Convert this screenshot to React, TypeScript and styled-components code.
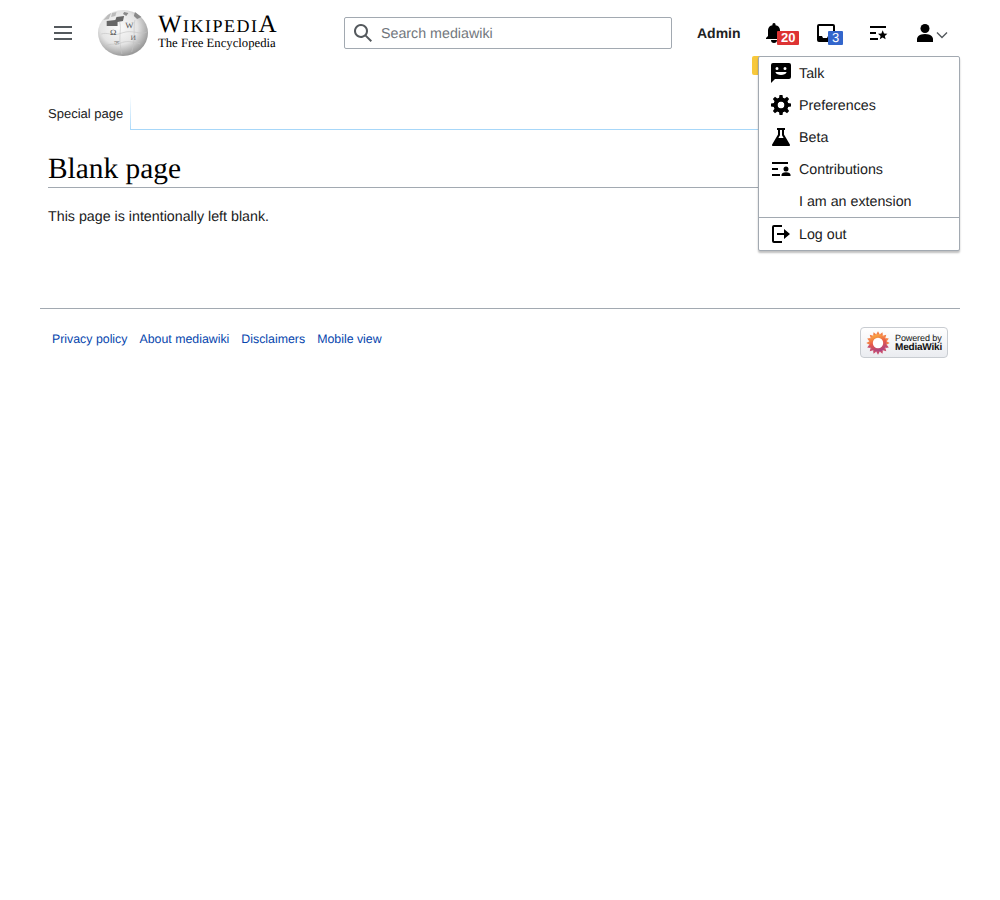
import React from "react";
import styled, { createGlobalStyle } from "styled-components";

const GlobalStyle = createGlobalStyle`
  html, body {
    margin: 0;
    padding: 0;
    background: #fff;
    font-family: "Liberation Sans", Arial, sans-serif;
    color: #202122;
    text-rendering: geometricPrecision;
  }
`;

const Page = styled.div`
  padding: 0 40px;
  width: 920px;
`;

const Header = styled.header`
  display: flex;
  align-items: center;
  height: 66px;
`;

const MenuButton = styled.div`
  width: 20px;
  height: 14px;
  margin: 0 25px 0 13px;
  color: #54595d;
  flex: none;

  svg {
    display: block;
  }
`;

const Logo = styled.div`
  display: flex;
  align-items: center;
  gap: 10px;
  width: 246px;
  flex: none;
`;

const Wordmark = styled.div`
  font-family: "Liberation Serif", "Times New Roman", serif;
  color: #000;
  display: flex;
  flex-direction: column;
  margin-top: -3px;
`;

const WordmarkTitle = styled.div`
  font-size: 25px;
  line-height: 24px;
  font-variant: small-caps;
  letter-spacing: 1.5px;
  white-space: nowrap;
`;

const WordmarkTag = styled.div`
  font-size: 12.7px;
  line-height: 14px;
  margin-top: -1px;
  white-space: nowrap;
`;

const SearchBox = styled.div`
  display: flex;
  align-items: center;
  gap: 8px;
  box-sizing: border-box;
  width: 328px;
  height: 32px;
  padding: 0 8px;
  border: 1px solid #a2a9b1;
  border-radius: 2px;
  color: #72777d;
  font-size: 14.25px;
  flex: none;
  margin-top: -1px;

  svg {
    color: #54595d;
    flex: none;
  }
`;

const TextLabel = styled.span`
  padding-top: 2px;
`;

const UserTools = styled.nav`
  position: relative;
  display: flex;
  align-items: center;
  margin-left: 25px;
  height: 40px;
`;

const UserName = styled.div`
  font-size: 14px;
  font-weight: bold;
  width: 67px;
`;

const ToolIcon = styled.div<{ $width: number }>`
  position: relative;
  width: ${(p) => p.$width}px;
  height: 20px;
  color: #000;
  flex: none;

  svg {
    display: block;
  }
`;

const Badge = styled.span<{ $bg: string; $left: number; $bold?: boolean }>`
  position: absolute;
  top: 8px;
  left: ${(p) => p.$left}px;
  padding: 0 4px;
  height: 14px;
  line-height: 14px;
  font-size: 13px;
  color: #fff;
  background: ${(p) => p.$bg};
  font-weight: ${(p) => (p.$bold ? "bold" : "normal")};
  border-radius: 1px;
`;

const Chevron = styled.svg`
  position: absolute;
  left: 21px;
  top: 8px;
`;

const YellowTag = styled.div`
  position: absolute;
  left: 55px;
  top: 43px;
  width: 20px;
  height: 19px;
  background: #f7c83c;
  border-radius: 2px;
`;

const Dropdown = styled.div`
  position: absolute;
  top: 43px;
  left: 61px;
  box-sizing: border-box;
  width: 202px;
  background: #fff;
  border: 1px solid #a2a9b1;
  border-radius: 2px;
  box-shadow: 0 2px 2px rgba(0, 0, 0, 0.25);
  z-index: 2;
`;

const DropdownItem = styled.div<{ $divided?: boolean }>`
  display: flex;
  align-items: center;
  gap: 8px;
  height: 32px;
  padding-left: 12px;
  font-size: 14.25px;
  color: #202122;
  border-top: ${(p) => (p.$divided ? "1px solid #a2a9b1" : "none")};

  svg {
    color: #000;
    flex: none;
  }
`;

const ItemIconSpace = styled.span`
  width: 20px;
  flex: none;
`;

const Tabs = styled.div`
  display: flex;
  height: 33px;
  margin-top: 31px;
`;

const Tab = styled.div`
  box-sizing: border-box;
  width: 91px;
  padding: 9px 0 0 8px;
  font-size: 13px;
  line-height: 16px;
  border-right: 1px solid;
  border-image: linear-gradient(to bottom, #fff 0, #a7d7f9 100%) 1;
`;

const TabRest = styled.div`
  flex: 1;
  box-sizing: border-box;
  border-bottom: 1px solid #a7d7f9;
`;

const Content = styled.main`
  padding: 0 8px;
`;

const Title = styled.h1`
  margin: 22px 0 0;
  font-family: "Liberation Serif", "Times New Roman", serif;
  font-weight: normal;
  font-size: 29.4px;
  line-height: 35px;
  color: #000;
  border-bottom: 1px solid #a2a9b1;
`;

const BodyText = styled.p`
  margin: 20px 0 0;
  font-size: 14.25px;
  line-height: 18px;
  color: #202122;
`;

const Footer = styled.footer`
  display: flex;
  justify-content: space-between;
  margin-top: 82px;
  padding: 18px 12px 0;
  border-top: 1px solid #a2a9b1;
`;

const FooterLinks = styled.div`
  display: flex;
  gap: 12px;
  padding-top: 5px;
  font-size: 12.35px;
  line-height: 15px;
  color: #0645ad;
`;

const PoweredBadge = styled.div`
  display: flex;
  align-items: center;
  gap: 5px;
  box-sizing: border-box;
  width: 88px;
  height: 31px;
  padding-left: 5px;
  border: 1px solid #c8ccd1;
  border-radius: 4px;
  background: linear-gradient(to bottom, #fff, #eaecf0);
`;

const PoweredText = styled.div`
  font-size: 9px;
  line-height: 10px;
  color: #111;
  letter-spacing: -0.1px;

  b {
    display: block;
    font-size: 10px;
    line-height: 10px;
    font-weight: bold;
    letter-spacing: -0.2px;
  }
`;

const Globe = () => (
  <svg width="50" height="46" viewBox="0 0 46 46" preserveAspectRatio="none">
    <defs>
      <radialGradient id="globe" cx="42%" cy="38%" r="62%">
        <stop offset="0%" stopColor="#fbfbfb" />
        <stop offset="60%" stopColor="#e4e4e4" />
        <stop offset="100%" stopColor="#9a9a9a" />
      </radialGradient>
    </defs>
    <circle cx="23" cy="23" r="23" fill="url(#globe)" />
    <path d="M8 16v-5l8-1 1-3 7-1-1 5-5 1v4z" fill="#666" />
    <path d="M34 2l6 5-4 2-3-3zM24 2l4 1-2 3-3-2z" fill="#8a8a8a" />
    <path d="M5 10l4-5 3-2-2 6zM13 3l4-1-1 4-4 1z" fill="#bbb" />
    <path d="M3 24c6-2 10 2 16 0s8-3 14-2 8 2 12 0M7 36c5-3 10-1 14-3s10-2 18 1M20 12c2 8-2 16 2 32M34 10c-2 8 1 18-3 32" stroke="#c4c4c4" strokeWidth="0.6" fill="none" />
    <text x="11" y="25" fontSize="8" fontFamily="Liberation Serif" fill="#555">Ω</text>
    <text x="25" y="18" fontSize="8" fontFamily="Liberation Serif" fill="#555">W</text>
    <text x="30" y="30" fontSize="7" fontFamily="Liberation Serif" fill="#666">И</text>
    <text x="15" y="35" fontSize="6" fontFamily="Liberation Serif" fill="#777">ত</text>
  </svg>
);

const Sunflower = () => {
  const petals = Array.from({ length: 16 }, (_, i) => i * 22.5);
  return (
    <svg width="24" height="24" viewBox="0 0 24 24">
      <defs>
        <linearGradient id="sun" x1="0.3" y1="0" x2="0.6" y2="1">
          <stop offset="0%" stopColor="#fdb53c" />
          <stop offset="50%" stopColor="#e85a4a" />
          <stop offset="100%" stopColor="#a13f8a" />
        </linearGradient>
      </defs>
      <circle cx="12" cy="12" r="9" fill="url(#sun)" />
      {petals.map((deg) => (
        <path key={deg} d="M10.2 3.5h3.6L12 .3z" transform={`rotate(${deg} 12 12)`} fill={deg > 90 && deg < 270 ? "#c84a6a" : "#f47f45"} />
      ))}
      <circle cx="12" cy="12" r="5.2" fill="#fff" />
    </svg>
  );
};

const GearIcon = () => {
  const tooth = "M11.5 0h-3l-1 6.5h5m0 7h-5l1 6.5h3";
  return (
    <svg width="20" height="20" viewBox="0 0 20 20" fill="currentColor">
      {[0, 45, 90, 135].map((deg) => (
        <path key={deg} d={tooth} transform={`rotate(${deg} 10 10)`} />
      ))}
      <path d="M10 2.5a7.5 7.5 0 0 0 0 15 7.5 7.5 0 0 0 0-15v4a3.5 3.5 0 0 1 0 7 3.5 3.5 0 0 1 0-7" />
    </svg>
  );
};

const icon20 = { width: 20, height: 20, viewBox: "0 0 20 20", fill: "currentColor" };

const menuItems = [
  {
    label: "Talk",
    icon: (
      <svg {...icon20}>
        <path d="M18 0H2a2 2 0 0 0-2 2v18l4-4h14a2 2 0 0 0 2-2V2a2 2 0 0 0-2-2m-4 4a1.5 1.5 0 1 1-1.5 1.5A1.5 1.5 0 0 1 14 4M6 4a1.5 1.5 0 1 1-1.5 1.5A1.5 1.5 0 0 1 6 4m4 8c-2.61 0-4.83-.67-5.65-3h11.3c-.82 2.33-3.04 3-5.65 3" />
      </svg>
    ),
  },
  { label: "Preferences", icon: <GearIcon /> },
  {
    label: "Beta",
    icon: (
      <svg {...icon20}>
        <path
          fillRule="evenodd"
          d="M13 7.61V3h1V1H6v2h1v4.61l-5.86 9.88A1 1 0 0 0 2 19h16a1 1 0 0 0 .86-1.51zM9 3h2v5.2L12.6 11H7.4L9 8.2z"
        />
      </svg>
    ),
  },
  {
    label: "Contributions",
    icon: (
      <svg {...icon20}>
        <path d="M1 3h16v2H1zm0 6h6v2H1zm0 6h8v2H1z" />
        <circle cx="15" cy="10" r="2.5" />
        <path d="M15 13.2c-3 0-4.5 1.4-4.5 2.6V17h9v-1.2c0-1.2-1.5-2.6-4.5-2.6" />
      </svg>
    ),
  },
  { label: "I am an extension", icon: <ItemIconSpace /> },
];

const App = () => {
  return (
    <Page>
      <GlobalStyle />
      <Header>
        <MenuButton>
          <svg width="20" height="14" viewBox="0 0 20 14" fill="currentColor">
            <path d="M1 0h18v2H1zm0 6h18v2H1zm0 6h18v2H1z" />
          </svg>
        </MenuButton>
        <Logo>
          <Globe />
          <Wordmark>
            <WordmarkTitle>WikipediA</WordmarkTitle>
            <WordmarkTag>The Free Encyclopedia</WordmarkTag>
          </Wordmark>
        </Logo>
        <SearchBox>
          <svg width="20" height="20" viewBox="0 0 20 20" fill="currentColor">
            <path d="M12.2 13.6a7 7 0 1 1 1.4-1.4l5.4 5.4-1.4 1.4zM3 8a5 5 0 1 0 10 0A5 5 0 0 0 3 8" />
          </svg>
          <TextLabel>Search mediawiki</TextLabel>
        </SearchBox>
        <UserTools>
          <UserName>Admin</UserName>
          <ToolIcon $width={52}>
            <svg {...icon20}>
              <path d="M16 7a5.38 5.38 0 0 0-4.46-4.85C11.6 1.46 11.53 0 10 0S8.4 1.46 8.46 2.15A5.38 5.38 0 0 0 4 7v6l-2 2v1h16v-1l-2-2zm-6 13a3 3 0 0 0 3-3H7a3 3 0 0 0 3 3" />
            </svg>
            <Badge $bg="#d33" $left={13} $bold>20</Badge>
          </ToolIcon>
          <ToolIcon $width={53}>
            <svg {...icon20}>
              <path
                fillRule="evenodd"
                d="M3 1a2 2 0 0 0-2 2v14a2 2 0 0 0 2 2h14a2 2 0 0 0 2-2V3a2 2 0 0 0-2-2zm0 2h14v10h-5l-1 2H7l-1-2H3z"
              />
            </svg>
            <Badge $bg="#36c" $left={12}>3</Badge>
          </ToolIcon>
          <ToolIcon $width={46}>
            <svg {...icon20}>
              <path d="M1 3h16v2H1zm0 6h6v2H1zm0 6h8v2H1zm8-4.24 3.38-.29L13.7 7.3l1.32 3.17 3.38.29-2.56 2.24.76 3.3-2.9-1.75-2.9 1.75.76-3.3z" />
            </svg>
          </ToolIcon>
          <ToolIcon $width={32}>
            <svg {...icon20}>
              <path d="M10 11c-5.92 0-8 3-8 5v3h16v-3c0-2-2.08-5-8-5" />
              <circle cx="10" cy="5.5" r="4.5" />
            </svg>
            <Chevron width="12" height="8" viewBox="0 0 12 8" fill="none" stroke="#54595d" strokeWidth="1.4">
              <path d="M1 1.5l5 5 5-5" />
            </Chevron>
          </ToolIcon>
          <YellowTag />
          <Dropdown>
            {menuItems.map((item) => (
              <DropdownItem key={item.label}>
                {item.icon}
                <TextLabel>{item.label}</TextLabel>
              </DropdownItem>
            ))}
            <DropdownItem $divided>
              <svg {...icon20}>
                <path d="M3 3h8V1H3a2 2 0 0 0-2 2v14a2 2 0 0 0 2 2h8v-2H3z" />
                <path d="M19 10l-6-5v4H6v2h7v4z" />
              </svg>
              <TextLabel>Log out</TextLabel>
            </DropdownItem>
          </Dropdown>
        </UserTools>
      </Header>
      <Tabs>
        <Tab>Special page</Tab>
        <TabRest />
      </Tabs>
      <Content>
        <Title>Blank page</Title>
        <BodyText>This page is intentionally left blank.</BodyText>
      </Content>
      <Footer>
        <FooterLinks>
          <span>Privacy policy</span>
          <span>About mediawiki</span>
          <span>Disclaimers</span>
          <span>Mobile view</span>
        </FooterLinks>
        <PoweredBadge>
          <Sunflower />
          <PoweredText>
            Powered by
            <b>MediaWiki</b>
          </PoweredText>
        </PoweredBadge>
      </Footer>
    </Page>
  );
};

export default App;
